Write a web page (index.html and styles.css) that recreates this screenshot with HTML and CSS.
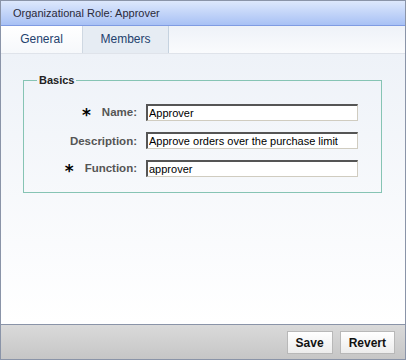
FILE: index.html
```html
<!DOCTYPE html>
<html>
<head>
<meta charset="utf-8">
<link rel="stylesheet" href="styles.css">
</head>
<body>
<div class="panel">
  <div class="titlebar">Organizational Role: Approver</div>
  <div class="tabs">
    <div class="tab active">General</div>
    <div class="tab">Members</div>
  </div>
  <div class="content">
    <fieldset class="basics">
      <legend>Basics</legend>
      <div class="row">
        <label class="lbl"><span class="req">*</span>Name:</label>
        <input class="field" type="text" value="Approver">
      </div>
      <div class="row">
        <label class="lbl">Description:</label>
        <input class="field" type="text" value="Approve orders over the purchase limit">
      </div>
      <div class="row">
        <label class="lbl"><span class="req">*</span>Function:</label>
        <input class="field" type="text" value="approver">
      </div>
    </fieldset>
  </div>
  <div class="footer">
    <button class="btn">Save</button>
    <button class="btn">Revert</button>
  </div>
</div>
</body>
</html>
```

FILE: styles.css
```css
html, body {
  margin: 0;
  padding: 0;
  background: #ffffff;
}
.panel {
  width: 404px;
  height: 358px;
  border: 1px solid #8a94a8;
  display: flex;
  flex-direction: column;
  font-family: "Liberation Sans", Arial, sans-serif;
}
.titlebar {
  height: 25px;
  box-sizing: border-box;
  border-bottom: 1px solid #7f9be2;
  background: linear-gradient(#dde8fc, #a8c1f5);
  color: #2a2a3a;
  font-size: 11px;
  line-height: 24px;
  padding-left: 12px;
}
.tabs {
  height: 28px;
  box-sizing: border-box;
  display: flex;
  border-bottom: 1px solid #dfe3ea;
  background: linear-gradient(#eef2f8, #fafbfd);
}
.tab {
  font-size: 12px;
  color: #24426e;
  line-height: 27px;
  text-align: center;
  box-sizing: border-box;
}
.tab.active {
  width: 81px;
  background: linear-gradient(#ffffff, #f6f8fb);
}
.tab:not(.active) {
  width: 87px;
  background: #e6ecf3;
  border-left: 1px solid #cfd8e2;
  border-right: 1px solid #c5d2df;
}
.content {
  flex: 1;
  background: linear-gradient(#eef2f8, #ffffff);
  padding: 20px 23px 0 22px;
}
.basics {
  margin: 0;
  width: 359px;
  box-sizing: border-box;
  border: 1px solid #86c4b4;
  padding: 18px 0 15px 0;
  display: flex;
  flex-direction: column;
  gap: 11px;
}
legend {
  font-size: 11px;
  font-weight: bold;
  color: #222;
  padding: 0 2px;
  margin-left: 13px;
}
.row {
  display: flex;
  align-items: center;
  height: 17px;
}
.lbl {
  width: 113px;
  text-align: right;
  font-size: 11.5px;
  font-weight: bold;
  color: #555;
  white-space: nowrap;
}
.req {
  display: inline-block;
  font-size: 17px;
  font-weight: bold;
  color: #000;
  font-family: "DejaVu Sans", sans-serif;
  line-height: 10px;
  vertical-align: -5px;
  margin-right: 11px;
}
.field {
  margin-left: 9px;
  width: 212px;
  height: 17px;
  box-sizing: border-box;
  border-style: solid;
  border-width: 2px 1px 1px 2px;
  border-color: #555 #d0ccc0 #d0ccc0 #555;
  padding: 0 0 0 1px;
  font-family: "Liberation Sans", Arial, sans-serif;
  font-size: 11px;
  color: #000;
  background: #fff;
  outline: none;
}
.footer {
  height: 35px;
  box-sizing: border-box;
  border-top: 1px solid #8a94a8;
  background: linear-gradient(#dadada, #c6c6c6);
  display: flex;
  justify-content: flex-end;
  align-items: center;
  gap: 7px;
  padding: 0 10px 0 0;
}
.btn {
  height: 23px;
  border: 1px solid #b8b8b8;
  background: linear-gradient(#ffffff, #ececec);
  font-family: "Liberation Sans", Arial, sans-serif;
  font-size: 12px;
  font-weight: bold;
  color: #111;
  padding: 0 8px;
  margin-top: 1px;
}
```
